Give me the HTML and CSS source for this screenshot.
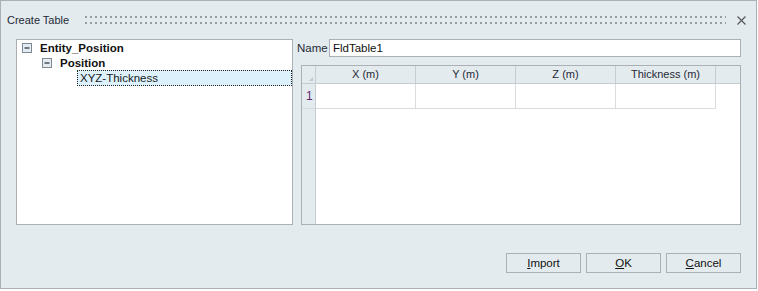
FILE: index.html
```html
<!DOCTYPE html>
<html lang="en">
<head>
  <meta charset="UTF-8" />
  <title>Create Table</title>
  <link rel="stylesheet" href="styles.css">
</head>
<body>
  <div class="dlg">
    <div class="titlebar">
      <span class="title">Create Table</span>
      <div class="grip"></div>
      <svg class="close" width="9" height="9" viewBox="0 0 9 9">
        <path d="M0.5 0.5 L8.5 8.5 M8.5 0.5 L0.5 8.5" stroke="#555a5e" stroke-width="1.2" fill="none"/>
      </svg>
    </div>

    <div class="main">
      <div class="tree">
        <div class="node lvl0">
          <svg class="exp" width="10" height="10" viewBox="0 0 10 10">
            <rect x="0.5" y="0.5" width="9" height="9" fill="#e6ebf0" stroke="#7d8a98"/>
            <path d="M2.5 5 H7.5" stroke="#1c2a3a" stroke-width="1.2"/>
          </svg>
          <span class="txt bold">Entity_Position</span>
        </div>
        <div class="node lvl1">
          <svg class="exp" width="10" height="10" viewBox="0 0 10 10">
            <rect x="0.5" y="0.5" width="9" height="9" fill="#e6ebf0" stroke="#7d8a98"/>
            <path d="M2.5 5 H7.5" stroke="#1c2a3a" stroke-width="1.2"/>
          </svg>
          <span class="txt bold">Position</span>
        </div>
        <div class="node lvl2">
          <span class="sel">XYZ-Thickness</span>
        </div>
      </div>

      <div class="right">
        <div class="namerow">
          <label class="lbl">Name</label>
          <input class="namebox" type="text" value="FldTable1" />
        </div>

        <div class="grid">
          <div class="rowhdr">
            <div class="corner"><span class="tri"></span></div>
            <div class="rnum">1</div>
          </div>
          <div class="cols">
            <div class="hdr">
              <div class="hc">X (m)</div>
              <div class="hc">Y (m)</div>
              <div class="hc">Z (m)</div>
              <div class="hc">Thickness (m)</div>
            </div>
            <div class="row">
              <div class="dc"></div>
              <div class="dc"></div>
              <div class="dc"></div>
              <div class="dc"></div>
            </div>
          </div>
        </div>
      </div>
    </div>

    <div class="buttons">
      <button class="btn"><u>I</u>mport</button>
      <button class="btn"><u>O</u>K</button>
      <button class="btn"><u>C</u>ancel</button>
    </div>
  </div>
</body>
</html>
```

FILE: styles.css
```css
body { margin: 0; background: #ffffff; font-family: "Liberation Sans", Arial, sans-serif; font-size: 11px; color: #1a1a1a; }

.dlg {
  width: 757px; height: 289px; box-sizing: border-box;
  border: 1px solid #abb0b4; background: #e4ebef;
}

/* title bar */
.titlebar { display: flex; align-items: center; height: 38px; padding: 0 10px 0 6px; }
.title { font-size: 11px; color: #1e2a36; }
.grip {
  flex: 1; height: 8px; margin: 0 11px 0 16px;
  background:
    linear-gradient(90deg, #969ca1 2px, transparent 2px) 0 0 / 5px 2px repeat-x,
    linear-gradient(90deg, #969ca1 2px, transparent 2px) 0 6px / 5px 2px repeat-x;
}
.close { display: block; }

/* main area */
.main { display: flex; padding-left: 15px; }

.tree {
  width: 277px; height: 186px; box-sizing: border-box;
  border: 1px solid #abb0b4; background: #fff;
}
.node { display: flex; align-items: center; height: 15px; }
.node.lvl2 { height: 16px; }
.lvl0 { padding-left: 5px; }
.lvl1 { padding-left: 25px; }
.lvl2 { padding-left: 60px; }
.exp { display: block; margin-right: 8px; }
.txt { font-size: 11.5px; }
.bold { font-weight: bold; color: #111; }
.sel {
  flex: 1; height: 16px; box-sizing: border-box; line-height: 14px;
  padding-left: 2px; font-size: 11.5px;
  background: #dcf1fb; border: 1px dotted #222;
}

.right { margin-left: 4px; width: 444px; }
.namerow { display: flex; align-items: center; height: 18px; }
.lbl { width: 32px; font-size: 11.5px; color: #1e2a36; }
.namebox {
  width: 412px; height: 18px; box-sizing: border-box; margin: 0;
  border: 1px solid #abb0b4; padding: 0 3px;
  font-family: "Liberation Sans", Arial, sans-serif; font-size: 11.5px; color: #111;
  outline: none;
}

/* table */
.grid {
  display: flex; margin: 8px 0 0 4px; width: 440px; height: 160px; box-sizing: border-box;
  border: 1px solid #abb0b4; background: #fff;
}
.rowhdr { width: 13px; background: #e4ebef; border-right: 1px solid #c7ccd0; }
.corner { height: 17px; border-bottom: 1px solid #c7ccd0; position: relative; }
.tri {
  position: absolute; right: 2px; bottom: 2px; width: 0; height: 0;
  border-left: 4px solid transparent; border-bottom: 4px solid #c3c8cc;
}
.rnum { height: 24px; border-bottom: 1px solid #d8dcdf; line-height: 25px; padding-left: 4px; color: #5a2a6e; font-size: 12px; }

.cols { flex: 1; }
.hdr { display: flex; height: 17px; background: #e4ebef; border-bottom: 1px solid #c7ccd0; }
.hc {
  width: 100px; box-sizing: border-box; border-right: 1px solid #c7ccd0;
  text-align: center; line-height: 17px; font-size: 11px; color: #1e2a36;
}
.row { display: flex; height: 25px; }
.dc { width: 100px; box-sizing: border-box; border-right: 1px solid #d8dcdf; border-bottom: 1px solid #d8dcdf; }

/* buttons */
.buttons { display: flex; justify-content: flex-end; gap: 5px; margin-top: 28px; padding-right: 15px; }
.btn {
  width: 75px; height: 20px; box-sizing: border-box; padding: 0;
  background: #e4ebef; border: 1px solid #abb0b4; border-radius: 0;
  font-family: "Liberation Sans", Arial, sans-serif; font-size: 11.5px; color: #111;
}
```
